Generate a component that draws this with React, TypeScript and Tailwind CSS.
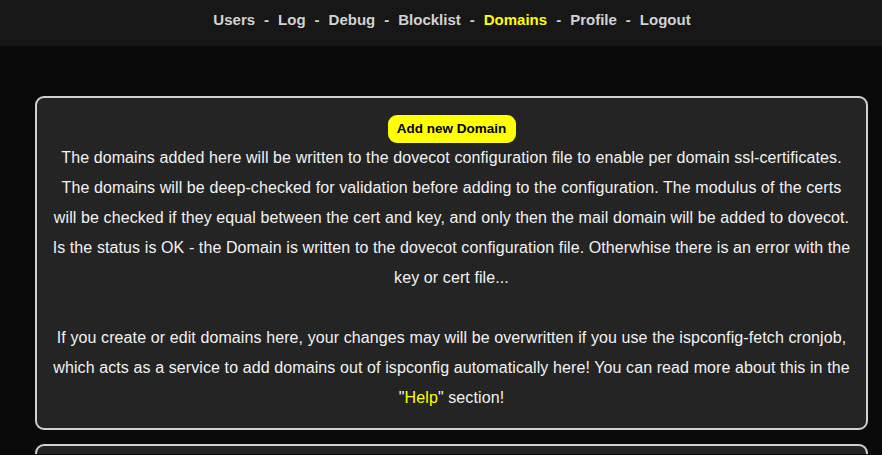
import React from "react";

const navItems = ["Users", "Log", "Debug", "Blocklist", "Domains", "Profile", "Logout"];

const App = () => {
  return (
    <div className="min-h-[455px] bg-[#0a0a0a] font-['Liberation_Sans',sans-serif] text-[#f2f2f2]">
      {/* top nav */}
      <nav className="h-[46px] bg-[#171717] flex justify-center items-start pt-[10px] pl-[22px]">
        {navItems.map((item, i) => (
          <span key={item} className="flex text-[15px] font-bold leading-[20px] text-[#d2d2d2]">
            {i > 0 && <span className="mx-[9px]">-</span>}
            <a className={item === "Domains" ? "text-[#ffff00]" : ""}>{item}</a>
          </span>
        ))}
      </nav>

      {/* domains info card */}
      <div className="mt-[50px] ml-[35px] w-[833px] rounded-[9px] border-2 border-[#d0d0d0] bg-[#242424] px-3 pt-[17px] pb-[15px] text-center">
        <button className="h-[28px] w-[128px] rounded-[9px] bg-[#ffff00] text-[13.5px] font-bold text-black">
          Add new Domain
        </button>
        <p className="text-[16px] leading-[30px] tracking-[0.1px] whitespace-nowrap">
          The domains added here will be written to the dovecot configuration file to enable per domain ssl-certificates.
          <br />
          The domains will be deep-checked for validation before adding to the configuration. The modulus of the certs
          <br />
          will be checked if they equal between the cert and key, and only then the mail domain will be added to dovecot.
          <br />
          Is the status is OK - the Domain is written to the dovecot configuration file. Otherwhise there is an error with the
          <br />
          key or cert file...
          <br />
          <br />
          If you create or edit domains here, your changes may will be overwritten if you use the ispconfig-fetch cronjob,
          <br />
          which acts as a service to add domains out of ispconfig automatically here! You can read more about this in the
          <br />
          "<span className="text-[#ffff00]">Help</span>" section!
        </p>
      </div>

      {/* next card */}
      <div className="mt-[14px] ml-[35px] w-[833px] h-[10px] rounded-t-[9px] border-2 border-b-0 border-[#d0d0d0] bg-[#242424]"></div>
    </div>
  );
};

export default App;
